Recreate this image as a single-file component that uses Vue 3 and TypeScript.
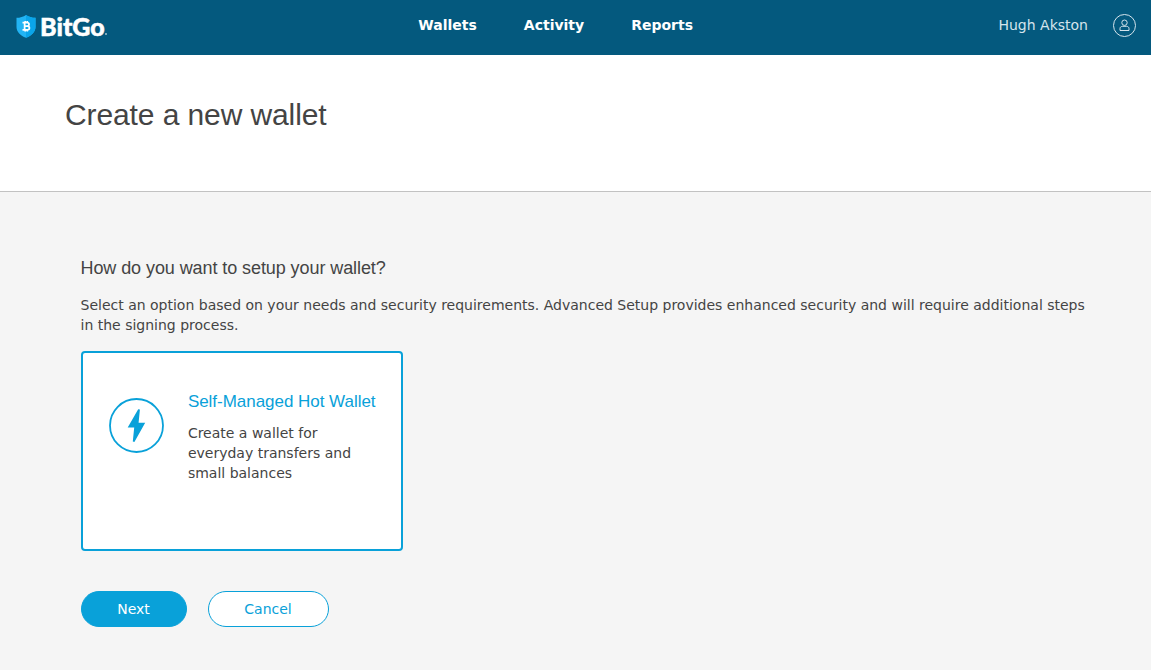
<template>
  <div class="page">
    <header class="topbar">
      <a class="brand" aria-label="BitGo">
        <svg class="brand-shield" width="20" height="23" viewBox="0 0 20 23">
          <path d="M10 0C7.4 1.9 4 2.8.5 2.8v9.1C.5 17 4.6 20.600 10 22.700c5.400-2.100 9.500-5.700 9.500-10.800V2.800C16 2.800 12.600 1.900 10 0z" fill="#22b4f4" />
          <path d="M10 0v22.700c5.400-2.100 9.500-5.700 9.500-10.800V2.800C16 2.800 12.600 1.900 10 0z" fill="#0aa5ea" />
          <path d="M8.600 7.600v7.200M6.500 7.600h4.600c2.600 0 2.600 3.500 0 3.500H8.600M11.100 11.100c3.100 0 3.100 3.800 0 3.800H6.500M9.200 5.900v1.700M11.300 5.900v1.700M9.200 14.800v1.700M11.300 14.800v1.700" fill="none" stroke="#fff" stroke-width="1.700" />
        </svg>
        <span class="brand-name">BitGo</span>
        <span class="brand-dot" />
      </a>

      <nav class="nav">
        <a v-for="link in links" :key="link" class="nav-link">{{ link }}</a>
      </nav>

      <div class="user">
        <span>{{ userName }}</span>
        <svg class="user-icon" width="23" height="23" viewBox="0 0 23 23" fill="none" stroke="#d5e4ec" stroke-width="1">
          <circle cx="11.500" cy="11.500" r="11" />
          <circle cx="11.500" cy="8.700" r="2.700" />
          <path d="M9.300 12.300c-1.400.2-2.300 1-2.300 2.200v2h9v-2c0-1.200-.9-2-2.300-2.200z" />
        </svg>
      </div>
    </header>

    <section class="title-bar">
      <h1 class="title">Create a new wallet</h1>
    </section>

    <main class="content">
      <h2 class="question">How do you want to setup your wallet?</h2>
      <p class="intro">
        Select an option based on your needs and security requirements. Advanced Setup provides enhanced security and will require additional steps in the signing process.
      </p>

      <div
        v-for="option in options"
        :key="option.id"
        class="option"
        :class="{ 'option-selected': selected === option.id }"
        @click="selected = option.id"
      >
        <svg class="option-icon" width="55" height="55" viewBox="0 0 55 55">
          <circle cx="27.500" cy="27.500" r="26.500" fill="none" stroke="#09a1d9" stroke-width="1.800" />
          <path d="M29.200 11.200 18.700 29.500h6.500L23.800 43.400l1.600.6L36.200 24.700h-6.600l1.300-13.300z" fill="#09a1d9" />
        </svg>
        <div class="option-body">
          <h3 class="option-title">{{ option.title }}</h3>
          <p class="option-text">{{ option.text }}</p>
        </div>
      </div>

      <div class="actions">
        <button class="btn btn-primary" type="button">Next</button>
        <button class="btn btn-outline" type="button">Cancel</button>
      </div>
    </main>
  </div>
</template>

<script setup lang="ts">
import { ref } from 'vue';

interface WalletOption {
  id: string;
  title: string;
  text: string;
}

const userName = 'Hugh Akston';
const links: string[] = ['Wallets', 'Activity', 'Reports'];

const options: WalletOption[] = [
  {
    id: 'hot',
    title: 'Self-Managed Hot Wallet',
    text: 'Create a wallet for everyday transfers and small balances'
  }
];

const selected = ref('hot');
</script>

<style>
body {
  margin: 0;
  background: #f5f5f5;
}
</style>

<style scoped>
.page {
  min-height: 670px;
  background: #f5f5f5;
  color: #444;
  font-family: "DejaVu Sans", sans-serif;
  font-size: 14px;
  line-height: 20px;
}

h1, h2, h3, p {
  margin: 0;
  font-weight: 400;
}

h1, h2, h3 {
  font-family: "Liberation Sans", Arial, sans-serif;
}

/* Top bar */
.topbar {
  display: grid;
  grid-template-columns: 402.3px auto 1fr;
  box-sizing: border-box;
  height: 55px;
  padding: 0 15px 0 16px;
  background: #04597e;
  color: #fff;
}

.brand {
  display: flex;
  align-items: flex-start;
  padding-top: 15px;
}

.brand-name {
  margin-left: 4px;
  font-family: Lato, sans-serif;
  font-size: 25px;
  font-weight: 900;
  line-height: 23px;
  letter-spacing: 0;
  -webkit-text-stroke: 0.5px #fff;
}

.brand-dot {
  width: 2px;
  height: 2px;
  margin-top: 18px;
  border-radius: 50%;
  background: #a5c3d0;
}

.nav {
  display: flex;
  gap: 47px;
  padding-top: 15px;
}

.nav-link {
  font-weight: 700;
}

.user {
  display: flex;
  justify-content: flex-end;
  gap: 25px;
  padding-top: 15px;
  color: #d5e4ec;
}

.user-icon {
  margin-top: -1px;
}

/* Page title */
.title-bar {
  box-sizing: border-box;
  height: 137px;
  padding: 40px 65px 0;
  border-bottom: 1px solid #c2c2c2;
  background: #fff;
}

.title {
  font-size: 30px;
  line-height: 40px;
  letter-spacing: -0.1px;
}

/* Wallet setup */
.content {
  padding: 66px 65px 0 80.5px;
}

.question {
  font-size: 18px;
  line-height: 20px;
  letter-spacing: -0.08px;
}

.intro {
  margin-top: 17px;
}

.option {
  display: flex;
  box-sizing: border-box;
  width: 322px;
  height: 200px;
  margin-top: 16px;
  padding: 38px 24px 0 26px;
  border: 2px solid transparent;
  border-radius: 4px;
  background: #fff;
}

.option-selected {
  border-color: #09a1d9;
}

.option-icon {
  flex-shrink: 0;
  margin-top: 7px;
}

.option-body {
  margin-left: 24.4px;
}

.option-title {
  padding-top: 1px;
  color: #09a1d9;
  font-size: 17px;
  line-height: 20px;
  letter-spacing: -0.03px;
  white-space: nowrap;
}

.option-text {
  width: 180px;
  margin-top: 11px;
}

.actions {
  display: flex;
  gap: 21px;
  margin-top: 40px;
}

.btn {
  box-sizing: border-box;
  height: 36px;
  padding: 0;
  border: 1px solid #09a1d9;
  border-radius: 18px;
  font: inherit;
}

.btn-primary {
  width: 106px;
  background: #09a1d9;
  color: #fff;
}

.btn-outline {
  width: 121px;
  background: #fff;
  color: #09a1d9;
}
</style>
